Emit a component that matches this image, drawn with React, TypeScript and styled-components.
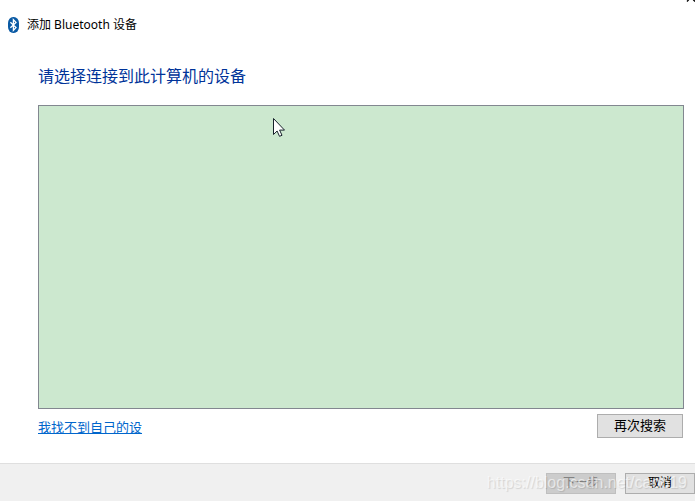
import React from "react";
import styled, { createGlobalStyle } from "styled-components";

const GlobalStyle = createGlobalStyle`
  *, *::before, *::after { box-sizing: border-box; }
  html, body, #root { height: 100%; margin: 0; }
  body {
    background: #fff;
    color: #000;
    font-family: "Noto Sans", "Noto Sans CJK SC", sans-serif;
    overflow: hidden;
  }
`;

const Dialog = styled.main`
  position: relative;
  display: flex;
  flex-direction: column;
  min-height: 100%;
  background: #fff;
`;

const TitleBar = styled.header`
  display: flex;
  align-items: center;
  gap: 8px;
  padding: 16px 8px 0;
`;

const Title = styled.h1`
  margin: 0;
  font-size: 12px;
  line-height: 18px;
  font-weight: 400;
`;

const CloseButton = styled.button`
  position: absolute;
  top: -8px;
  right: -1px;
  width: 10px;
  height: 10px;
  padding: 0;
  border: 0;
  background: none;
  svg { display: block; }
`;

const Content = styled.section`
  display: flex;
  flex: 1;
  flex-direction: column;
  padding: 31px 11px 25px 38px;
`;

const Heading = styled.h2`
  margin: 0 0 18px;
  color: #003399;
  font-size: 16px;
  line-height: 22px;
  font-weight: 400;
`;

const DeviceList = styled.div`
  position: relative;
  flex: 1;
  border: 1px solid #828790;
  background: #cce8cf;
`;

const Pointer = styled.svg`
  position: absolute;
  top: 12px;
  left: 234px;
`;

const ListActions = styled.div`
  display: flex;
  align-items: flex-start;
  justify-content: space-between;
  padding: 5px 1px 0 0;
`;

const HelpLink = styled.a`
  margin-top: 4px;
  color: #0066cc;
  font-size: 13px;
  line-height: 18px;
  text-decoration: underline;
`;

const Button = styled.button<{ $size: "regular" | "compact" }>`
  width: ${({ $size }) => ($size === "regular" ? 86 : 70)}px;
  height: ${({ $size }) => ($size === "regular" ? 24 : 21)}px;
  padding: 0 0 2px;
  border: 1px solid #adadad;
  background: #e1e1e1;
  color: #000;
  font-family: inherit;
  font-size: ${({ $size }) => ($size === "regular" ? 13 : 12)}px;
  line-height: 18px;
  &:disabled {
    border-color: #bfbfbf;
    background: #cccccc;
    color: #838383;
  }
`;

const Footer = styled.footer`
  position: relative;
  display: flex;
  justify-content: flex-end;
  gap: 9px;
  padding: 9px 0 7px;
  border-top: 1px solid #dfdfdf;
  background: #f0f0f0;
`;

const Watermark = styled.span`
  position: absolute;
  right: 8px;
  bottom: 8px;
  color: rgba(255, 255, 255, 0.6);
  font-family: "Liberation Sans", Arial, sans-serif;
  font-size: 16px;
  line-height: 20px;
  text-shadow: 1px 1px 1px rgba(0, 0, 0, 0.12);
  pointer-events: none;
`;

function BluetoothIcon() {
  return (
    <svg width="11" height="16" viewBox="0 0 11 16" aria-hidden="true">
      <rect width="11" height="16" rx="5.2" ry="6" fill="#0a5aa4" />
      <path d="M2.4 5.2 8 10.6 5.4 13.3V2.7L8 5.4 2.4 10.8" fill="none" stroke="#fff" strokeWidth="1.3" />
    </svg>
  );
}

export default function App() {
  return (
    <>
      <GlobalStyle />
      <Dialog>
        <TitleBar>
          <BluetoothIcon />
          <Title>添加 Bluetooth 设备</Title>
          <CloseButton type="button" aria-label="关闭">
            <svg width="10" height="10" viewBox="0 0 10 10" aria-hidden="true">
              <path d="M1 1 9 9.5M9 1 1 9.5" stroke="#000" strokeWidth="1.3" />
            </svg>
          </CloseButton>
        </TitleBar>
        <Content>
          <Heading id="device-heading">请选择连接到此计算机的设备</Heading>
          <DeviceList role="listbox" aria-labelledby="device-heading" tabIndex={0}>
            <Pointer width="12" height="19" viewBox="0 0 12 19" aria-hidden="true">
              <path d="M.5.5v16l3.6-3.5 2.4 5.3 2.5-1-2.4-5.2h4.9Z" fill="#fff" stroke="#17212b" />
            </Pointer>
          </DeviceList>
          <ListActions>
            <HelpLink href="#help">我找不到自己的设</HelpLink>
            <Button type="button" $size="regular">再次搜索</Button>
          </ListActions>
        </Content>
        <Footer>
          <Button type="button" $size="compact" disabled>下一步</Button>
          <Button type="button" $size="compact">取消</Button>
          <Watermark>https://blog.csdn.net/cao619</Watermark>
        </Footer>
      </Dialog>
    </>
  );
}
